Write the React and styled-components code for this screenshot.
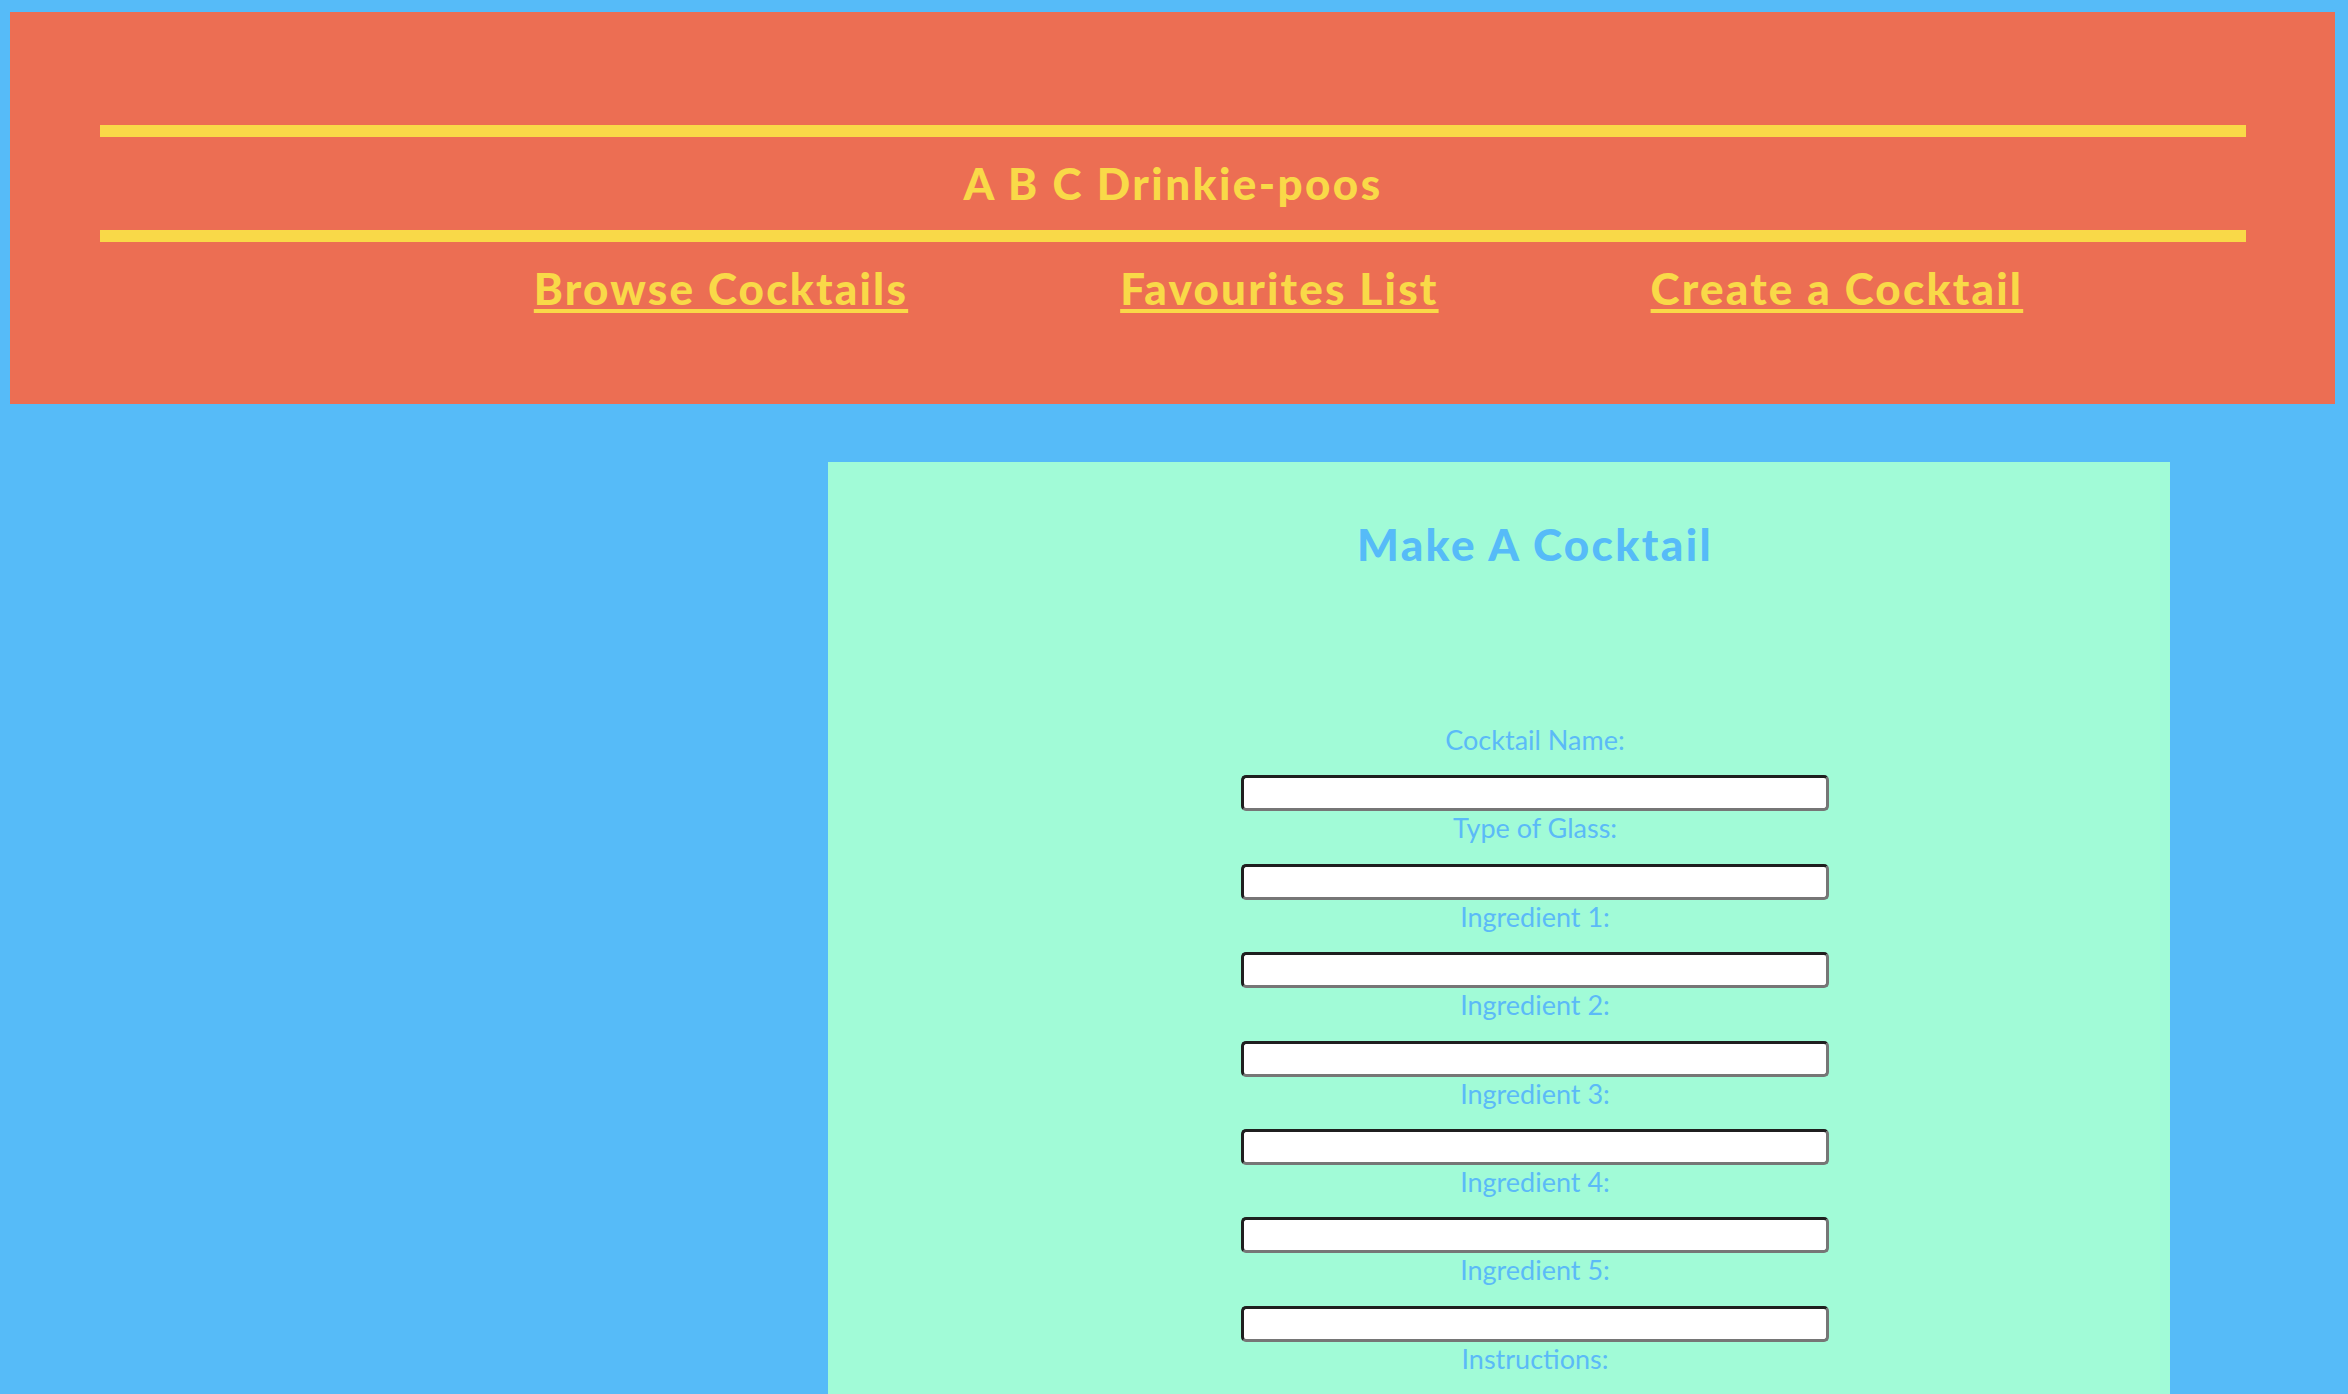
import React from 'react';
import styled, { createGlobalStyle } from 'styled-components';

const GlobalStyle = createGlobalStyle`
  html, body {
    margin: 0;
    padding: 0;
    background-color: #56bbf8;
    font-family: Lato, "Open Sans", sans-serif;
  }
`;

const SHeader = styled.header`
  margin: 12px 13px 0 10px;
  padding: 113px 0 90px;
  background-color: #ec6e53;
`;

const STitleBar = styled.div`
  margin: 0 89px 0 90px;
  border-top: 12px solid #f9d948;
  border-bottom: 12px solid #f9d948;
`;

const STitle = styled.h1`
  margin: 0;
  font-size: 44px;
  font-weight: 900;
  line-height: 93px;
  color: #f9d948;
  text-align: center;
  letter-spacing: 2.4px;
`;

const SNav = styled.nav`
  display: flex;
  justify-content: center;
  padding-top: 20px;
`;

const SNavLink = styled.a`
  margin-left: 212px;
  font-size: 44px;
  font-weight: 900;
  line-height: 52px;
  color: #f9d948;
  text-decoration: underline;
  text-decoration-thickness: 4px;
  text-underline-offset: 4px;
  letter-spacing: 2.2px;
  cursor: pointer;
`;

const SMain = styled.main`
  display: grid;
  grid-template-columns: 818px 1342px;
  margin: 58px 0 0 10px;
`;

const SAside = styled.aside``;

const SPanel = styled.section`
  background-color: #a1fbd7;
  padding: 57px 0 80px 72px;
`;

const SPanelTitle = styled.h2`
  margin: 0;
  font-size: 44px;
  font-weight: 900;
  line-height: 50px;
  color: #56bbf8;
  text-align: center;
  letter-spacing: 2.4px;
`;

const SForm = styled.form`
  margin-top: 154px;
  text-align: center;
`;

const SLabel = styled.label`
  display: block;
  font-size: 27px;
  line-height: 34.4px;
  color: #5bbaf7;
`;

const SInput = styled.input`
  display: block;
  box-sizing: border-box;
  width: 588px;
  height: 36px;
  margin: 18px auto 0;
  padding: 0 8px;
  background: #fff;
  border: 3px solid;
  border-color: #1f1f1f #767676 #767676 #1f1f1f;
  border-radius: 5px;
  font-size: 20px;
`;

const STextArea = styled.textarea`
  display: block;
  box-sizing: border-box;
  width: 588px;
  height: 160px;
  margin: 18px auto 0;
  border: 3px solid;
  border-color: #1f1f1f #767676 #767676 #1f1f1f;
  border-radius: 5px;
`;

const fields = [
  'Cocktail Name:',
  'Type of Glass:',
  'Ingredient 1:',
  'Ingredient 2:',
  'Ingredient 3:',
  'Ingredient 4:',
  'Ingredient 5:',
];

function App() {
  return (
    <>
      <GlobalStyle />
      <SHeader>
        <STitleBar>
          <STitle>A B C Drinkie-poos</STitle>
        </STitleBar>
        <SNav>
          <SNavLink>Browse Cocktails</SNavLink>
          <SNavLink>Favourites List</SNavLink>
          <SNavLink>Create a Cocktail</SNavLink>
        </SNav>
      </SHeader>
      <SMain>
        <SAside />
        <SPanel>
          <SPanelTitle>Make A Cocktail</SPanelTitle>
          <SForm onSubmit={e => e.preventDefault()}>
            {fields.map((field, index) => (
              <div key={index}>
                <SLabel htmlFor={'field' + index}>{field}</SLabel>
                <SInput id={'field' + index} type="text" />
              </div>
            ))}
            <SLabel htmlFor="instructions">Instructions:</SLabel>
            <STextArea id="instructions" />
          </SForm>
        </SPanel>
      </SMain>
    </>
  );
}

export default App;
